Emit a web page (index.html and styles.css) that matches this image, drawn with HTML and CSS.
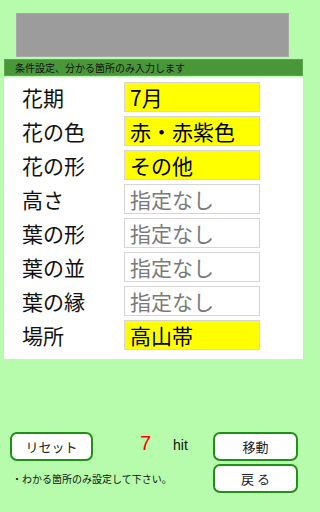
FILE: index.html
```html
<!DOCTYPE html>
<html lang="ja">
<head>
<meta charset="utf-8">
<link rel="stylesheet" href="styles.css">
</head>
<body>
<div class="ad"></div>
<div class="bar">条件設定、分かる箇所のみ入力します</div>
<div class="panel">
  <div class="row"><span class="label">花期</span><span class="field set">7月</span></div>
  <div class="row"><span class="label">花の色</span><span class="field set">赤・赤紫色</span></div>
  <div class="row"><span class="label">花の形</span><span class="field set">その他</span></div>
  <div class="row"><span class="label">高さ</span><span class="field">指定なし</span></div>
  <div class="row"><span class="label">葉の形</span><span class="field">指定なし</span></div>
  <div class="row"><span class="label">葉の並</span><span class="field">指定なし</span></div>
  <div class="row"><span class="label">葉の縁</span><span class="field">指定なし</span></div>
  <div class="row"><span class="label">場所</span><span class="field set">高山帯</span></div>
</div>
<div class="footer">
  <button class="btn reset">リセット</button>
  <div class="count"><span class="num">7</span><span class="hit">hit</span></div>
  <button class="btn move">移動</button>
  <div class="note">・わかる箇所のみ設定して下さい。</div>
  <button class="btn back">戻 る</button>
</div>
</body>
</html>
```
FILE: styles.css
```css
html, body {
  margin: 0;
  padding: 0;
}
body {
  background: #b6fcac;
  font-family: "Noto Sans CJK JP", "Noto Sans", sans-serif;
  width: 307px;
  height: 512px;
  overflow: hidden;
  padding-top: 13px;
  box-sizing: border-box;
}
.ad {
  margin-left: 16px;
  width: 273px;
  height: 44px;
  background: #9c9c9c;
  box-sizing: border-box;
  border: 1px solid #a8a8a8;
}
.bar {
  margin-top: 2px;
  margin-left: 4px;
  width: 299px;
  height: 17px;
  box-sizing: border-box;
  background: #4a973a;
  border: 1px solid #5aa84a;
  color: #111;
  font-size: 10px;
  line-height: 15px;
  padding-left: 10px;
}
.panel {
  margin-top: 1px;
  margin-left: 4px;
  width: 299px;
  height: 282px;
  box-sizing: border-box;
  background: #fff;
  padding: 5px 0 0 18px;
  display: flex;
  flex-direction: column;
  gap: 4px;
}
.row {
  display: flex;
  align-items: center;
  height: 30px;
}
.label {
  width: 102px;
  font-size: 21px;
  color: #111;
  line-height: 30px;
}
.field {
  width: 136px;
  height: 30px;
  box-sizing: border-box;
  border: 1px solid #d6d6d6;
  background: #fff;
  color: #7a7a7a;
  font-size: 21px;
  line-height: 28px;
  padding-left: 5px;
}
.field.set {
  background: #ffff00;
  color: #000;
}
.footer {
  margin-top: 73px;
  padding: 0 9px 0 10px;
  display: grid;
  grid-template-columns: 83px 1fr 85px;
  grid-template-rows: 29px 29px;
  row-gap: 3px;
}
.btn {
  margin: 0;
  padding: 0;
  background: #fff;
  border: 2px solid #209016;
  border-radius: 7px;
  font-family: "Noto Sans CJK JP", sans-serif;
  font-size: 13px;
  color: #222;
}
.reset { grid-column: 1; grid-row: 1; }
.move { grid-column: 3; grid-row: 1; }
.back { grid-column: 3; grid-row: 2; }
.count {
  grid-column: 2;
  grid-row: 1;
  display: flex;
  align-items: baseline;
  padding-left: 47px;
  font-family: "Liberation Sans", Arial, sans-serif;
  line-height: 1;
  padding-top: 1px;
}
.num {
  color: #f00;
  font-size: 20px;
  width: 33px;
}
.hit {
  color: #111;
  font-size: 14px;
}
.note {
  grid-column: 1 / 3;
  grid-row: 2;
  font-size: 10px;
  color: #111;
  align-self: center;
  padding-left: 2px;
}
```
